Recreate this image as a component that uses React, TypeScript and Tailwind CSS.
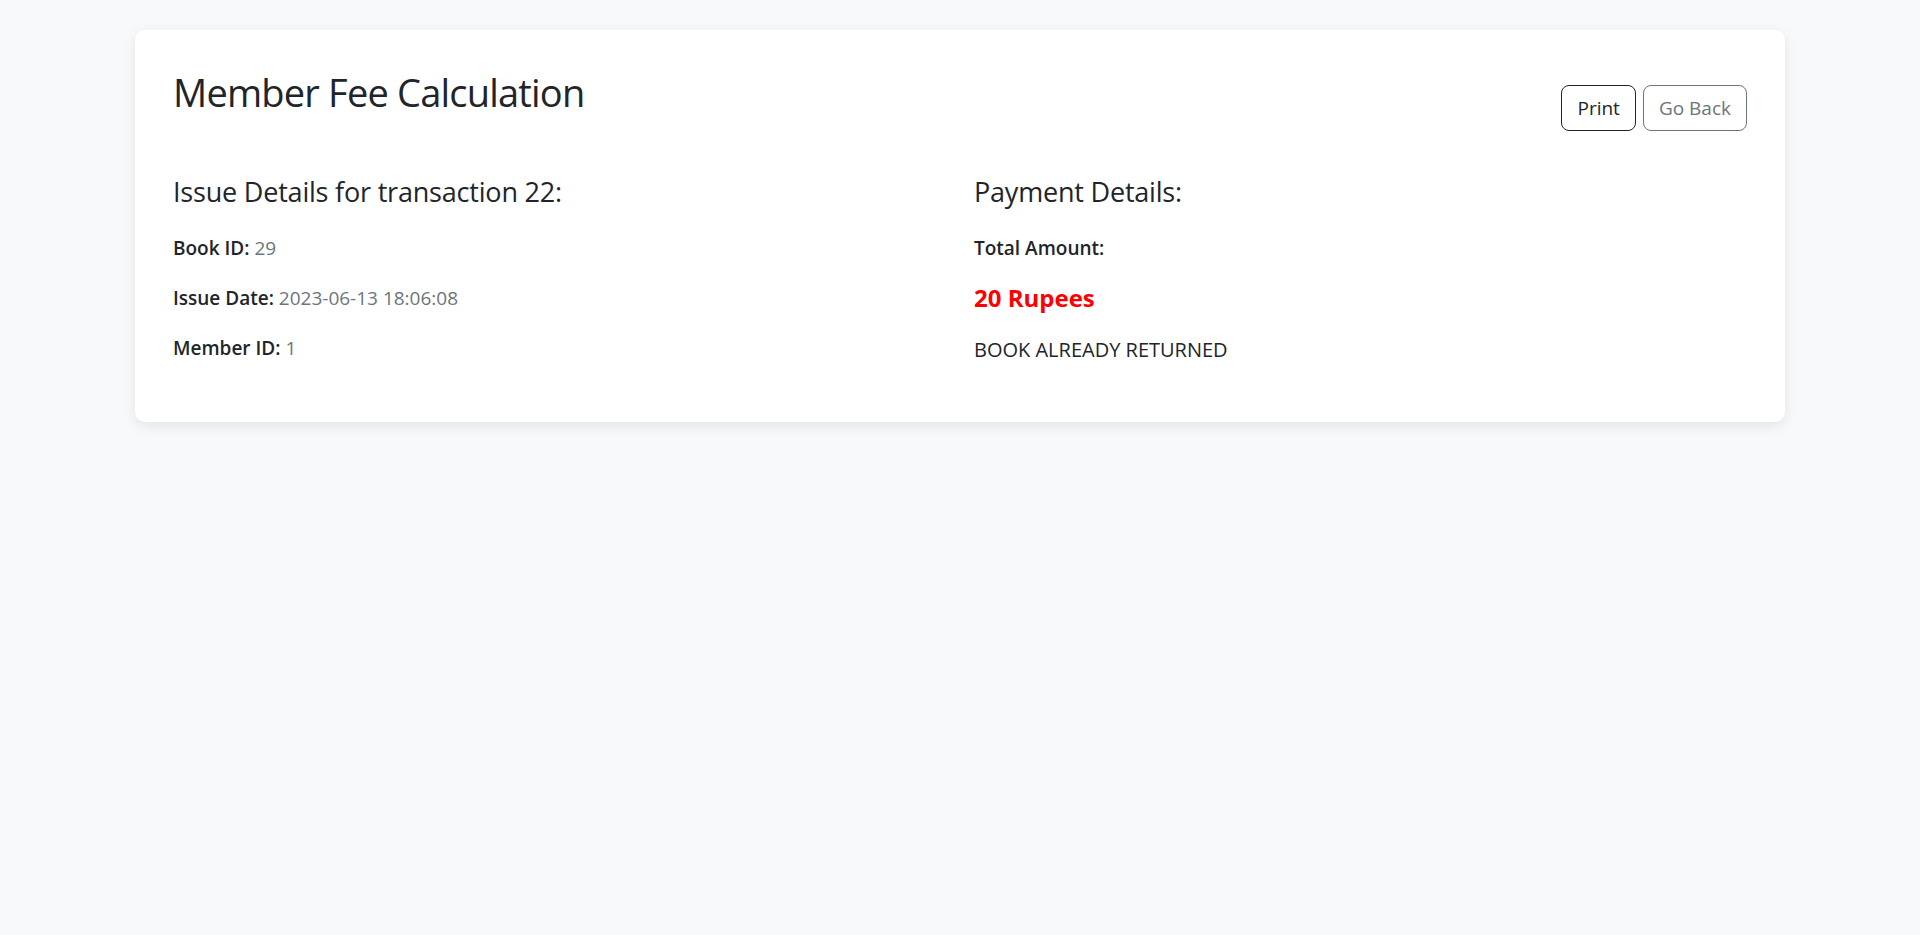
const font = { fontFamily: '"Open Sans", "Noto Sans", sans-serif' };

const Detail = (props: { label: string; value: string }) => {
  return (
    <p className="mb-[20px] leading-[30px]">
      <strong className="font-semibold text-[#212529]">{props.label}</strong>{" "}
      <span className="text-[#6c757d]">{props.value}</span>
    </p>
  );
};

export default function App() {
  return (
    <div className="min-h-[935px] bg-[#f8f9fa] pt-[30px]" style={font}>
      <div className="mx-auto w-[1650px] rounded-[10px] bg-white px-[38px] pt-[38px] pb-[37px] text-[19px] text-[#212529] shadow-[0_4px_14px_rgba(0,0,0,0.09)]">
        <div className="mb-[44px] flex items-start justify-between">
          <h1 className="text-[38px] leading-[48px] font-medium tracking-[-0.8px] text-[#212529]">
            Member Fee Calculation
          </h1>
          <div className="mt-[17px] flex gap-[7px]">
            <button className="h-[46px] rounded-[8px] border border-[#212529] px-[15px] text-[19px] text-[#212529]">
              Print
            </button>
            <button className="h-[46px] rounded-[8px] border border-[#6c757d] px-[15px] text-[19px] text-[#6c757d]">
              Go Back
            </button>
          </div>
        </div>
        <div className="grid grid-cols-2 gap-x-[24px]">
          <div>
            <h3 className="mb-[24px] text-[27px] leading-[34px] font-medium tracking-[-0.2px] text-[#212529]">
              Issue Details for transaction 22:
            </h3>
            <Detail label="Book ID:" value="29" />
            <Detail label="Issue Date:" value="2023-06-13 18:06:08" />
            <Detail label="Member ID:" value="1" />
          </div>
          <div className="pl-[2px]">
            <h3 className="mb-[24px] text-[27px] leading-[34px] font-medium tracking-[-0.2px] text-[#212529]">
              Payment Details:
            </h3>
            <p className="mb-[20px] leading-[30px]">
              <strong className="font-semibold">Total Amount:</strong>
            </p>
            <h5 className="mb-[22px] text-[24px] leading-[30px] font-bold text-[#ff0000]">
              20 Rupees
            </h5>
            <p className="mb-[20px] text-[20px] leading-[30px]">BOOK ALREADY RETURNED</p>
          </div>
        </div>
      </div>
    </div>
  );
}
